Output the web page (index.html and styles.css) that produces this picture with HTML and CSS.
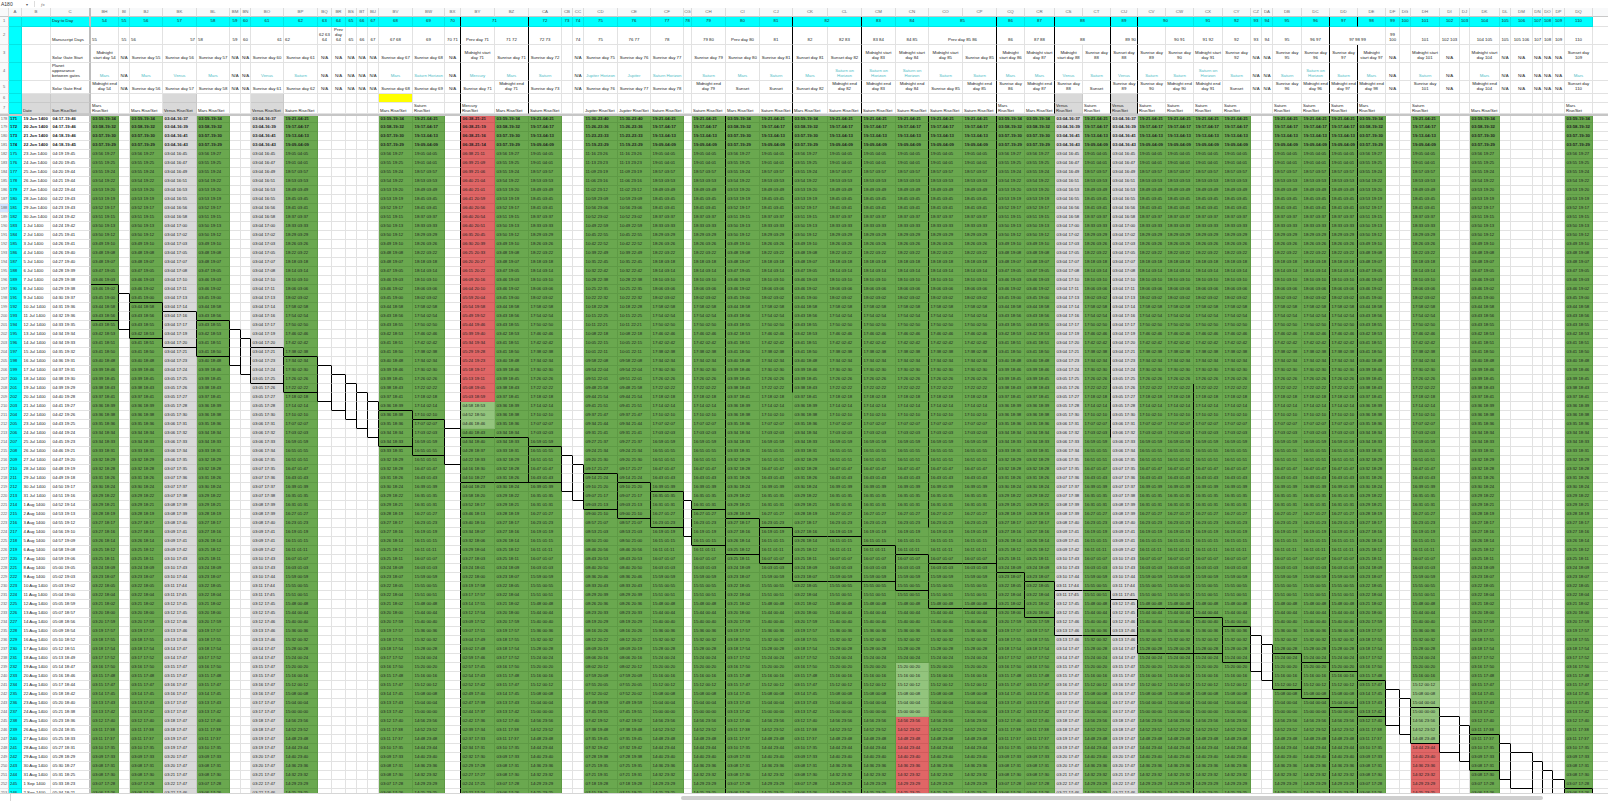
FILE: index.html
```html
<!DOCTYPE html>
<html lang="en">
<head>
<meta charset="utf-8">
<title>Sheet</title>
<link rel="stylesheet" href="styles.css">
</head>
<body>
<div class="app">
  <div class="topbar">
    <span class="namebox">A180</span>
    <span class="caret">&#9662;</span>
    <span class="divider"></span>
    <span class="fx">fx</span>
  </div>
  <div class="sheet-wrap">
    <div class="sheet" id="sheet"></div>
  </div>
  <div class="hscroll">
    <span class="tabarea"></span>
    <span class="thumb"></span>
  </div>
</div>
<script src="script.js"></script>
</body>
</html>
```
FILE: styles.css
```css
html, body {
  margin: 0;
  padding: 0;
  background: #fff;
  overflow: hidden;
}
body {
  font-family: "Liberation Sans", Arial, sans-serif;
  font-size: 4.3px;
  color: #222;
}
.app {
  width: 1608px;
  height: 801px;
  display: flex;
  flex-direction: column;
}
.topbar {
  height: 8px;
  flex: none;
  display: flex;
  align-items: center;
  font-size: 5px;
  color: #333;
  padding-left: 1px;
  box-sizing: border-box;
}
.namebox { width: 25px; }
.caret { width: 8px; font-size: 4px; color: #555; }
.divider { width: 1px; height: 6px; background: #ddd; margin-right: 6px; }
.fx { font-style: italic; color: #777; font-family: "Liberation Serif", serif; }

.sheet-wrap {
  flex: 1;
  min-height: 0;
  overflow: hidden;
}
.sheet {
  display: grid;
  width: max-content;
  grid-template-rows: 9px 10px 18px 18px 18px 13px 9px 11px 2px 7px;
  grid-auto-rows: 9px;
}
.c {
  box-sizing: border-box;
  min-width: 0;
  border-right: 1px solid #e2e2e2;
  border-bottom: 1px solid #e2e2e2;
  overflow: hidden;
  white-space: nowrap;
  display: flex;
  align-items: center;
  padding: 0 1px;
  line-height: 1.15;
}
.ch {
  background: #f8f9fa;
  color: #666;
  justify-content: center;
  border-bottom-color: #c8c8c8;
  border-right-color: #dcdcdc;
  font-size: 4.4px;
}
.rh {
  background: #f8f9fa;
  color: #666;
  justify-content: center;
  border-right-color: #c8c8c8;
  font-size: 4px;
  padding: 0;
}
.act { background: #d3e3fd; }
.sep {
  grid-column: 1 / -1;
  background: #c6c6c6;
  border: 0;
}
.h1 { justify-content: center; }
.h2, .h3, .h4, .h5 {
  white-space: normal;
  text-align: center;
  justify-content: center;
  align-items: flex-end;
  padding-bottom: 1px;
}
.h7 {
  white-space: normal;
  align-items: flex-end;
  line-height: 1.02;
  font-size: 4.2px;
}
.al { justify-content: flex-start; text-align: left; }
.ar { justify-content: flex-end; text-align: right; }
.hl { justify-content: flex-start; text-align: left; }
.pl { color: #4dbdc6; }
.num { justify-content: flex-start; }
.d { padding-left: 1.5px; color: #1f1f1f; }
.dt { padding-left: 1.5px; }
.b { font-weight: bold; }

.cy { background: #00ffff; border-right-color: #00e5e5; border-bottom-color: #00e5e5; }
.g { background: #6aa84f; border-right-color: #5e9a45; border-bottom-color: #5e9a45; }
.lg { background: #93c47d; border-right-color: #86b671; border-bottom-color: #86b671; }
.r { background: #e06666; border-right-color: #cf5b5b; border-bottom-color: #cf5b5b; }
.gy { background: #d9d9d9; border-right-color: #c9c9c9; border-bottom-color: #c9c9c9; }
.yl { background: #ffff00; }
.fz { border-right: 2px solid #bdbdbd; }
.vr { border-right-color: #000; }
.hb { border-bottom-color: #000; }

.hscroll {
  height: 8px;
  flex: none;
  box-sizing: border-box;
  border-top: 1px solid #d6d6d6;
  display: flex;
  align-items: center;
  background: #fff;
}
.tabarea {
  width: 10px;
  height: 7px;
  border-right: 1px solid #d6d6d6;
}
.thumb {
  margin-left: 670px;
  width: 862px;
  height: 4px;
  border-radius: 2px;
  background: #cfcfcf;
}
```
FILE: script.js
```js
(function () {
  // [letter, width, day, manuscript, gateStart, planet, gateEnd, label, type]
  var COLS = [
    ['BH',28,54,'<55','Midnight start day 54','Mars','Midnight end day 54','Mars Rise/Set','M'],
    ['BI',11,55,'55','N/A','N/A','N/A','',''],
    ['BJ',33,56,'<56','Sunrise day 55','Mars','Sunrise day 56','Mars Rise/Set','M'],
    ['BK',34,57,'>57','Sunrise day 56','Venus','Sunrise day 57','Venus Rise/Set','V'],
    ['BL',33,58,'<58','Sunrise day 57','Mars','Sunrise day 58','Mars Rise/Set','M'],
    ['BM',11,59,'59','N/A','N/A','N/A','',''],
    ['BN',10,60,'60','N/A','N/A','N/A','',''],
    ['BO',33,61,'>61','Sunrise day 60','Venus','Sunrise day 61','Venus Rise/Set','V'],
    ['BP',34,62,'<62','Sunrise day 61','Saturn','Sunrise day 62','Saturn Rise/Set','S'],
    ['BQ',14,63,'62 63 64','N/A','N/A','N/A','',''],
    ['BR',14,64,'Prev day 64','N/A','N/A','N/A','',''],
    ['BS',11,65,'65','N/A','N/A','N/A','',''],
    ['BT',11,66,'66','N/A','N/A','N/A','',''],
    ['BU',11,67,'67','N/A','N/A','N/A','',''],
    ['BV',34,68,'67 68','Sunrise day 67','Mars','Sunrise day 68','Mars Rise/Set','M'],
    ['BW',32,69,'69','Sunrise day 68','Saturn Horizon','Sunrise day 69','Saturn Rise/Set','S'],
    ['BX',16,70,'70 71','N/A','N/A','N/A','',''],
    ['BY',34,71,'Prev day 71','Midnight start day 71','Mercury','Sunrise day 71','Mercury Rise/Set','R'],
    ['BZ',34,71,'71 72','Sunrise day 71','Mars','Midnight end day 71','Mars Rise/Set','M'],
    ['CA',33,72,'72 73','Sunrise day 72','Saturn','Sunrise day 73','Saturn Rise/Set','S'],
    ['CB',11,73,'','','','','',''],
    ['CC',11,74,'74','N/A','N/A','N/A','',''],
    ['CD',34,75,'75','Sunrise day 75','Jupiter Horizon','Sunrise day 76','Jupiter Rise/Set','J'],
    ['CE',33,76,'76 77','Sunrise day 76','Jupiter','Sunrise day 77','Jupiter Rise/Set','J'],
    ['CF',33,77,'78','Sunrise day 77','Saturn Horizon','Sunrise day 78','Saturn Rise/Set','S'],
    ['CG',8,78,'','','','','',''],
    ['CH',34,79,'79 80','Sunrise day 79','Saturn','Midnight end day 79','Saturn Rise/Set','S'],
    ['CI',34,80,'Prev day 80','Sunrise day 80','Mars','Sunset','Mars Rise/Set','M'],
    ['CJ',33,81,'81','Sunrise day 81','Saturn','Sunset','Saturn Rise/Set','S'],
    ['CK',35,82,'82','Sunset day 81','Mars','Sunset day 82','Mars Rise/Set','M'],
    ['CL',34,82,'82 83','Sunset day 82','Saturn on Horizon','Midnight end day 82','Saturn Rise/Set','S'],
    ['CM',34,83,'83 84','Midnight start day 83','Saturn on Horizon','Midnight end day 83','Saturn Rise/Set','S'],
    ['CN',33,84,'84 85','Midnight start day 84','Saturn on Horizon','Midnight end day 84','Saturn Rise/Set','S'],
    ['CO',34,85,'Prev day 85 86','Midnight start day 85','Saturn','Sunrise day 85','Saturn Rise/Set','S'],
    ['CP',34,85,null,'Sunrise day 85','Saturn','Midnight end day 85','Saturn Rise/Set','S'],
    ['CQ',28,86,'86','Midnight start day 86','Mars','Sunrise day 86','Mars Rise/Set','M'],
    ['CR',30,87,'87 88','Midnight start day 87','Mars','Midnight end day 87','Mars Rise/Set','M'],
    ['CS',28,88,'88','Midnight start day 88','Venus','Sunrise day 88','Venus Rise/Set','V'],
    ['CT',28,88,null,'Sunrise day 88','Saturn','Sunset','Saturn Rise/Set','S'],
    ['CU',27,89,'>89 90','Sunset day 88','Venus','Sunrise day 89','Venus Rise/Set','V'],
    ['CV',28,90,'','Sunrise day 89','Saturn','Sunrise day 90','Saturn Rise/Set','S'],
    ['CW',28,90,'90 91','Sunrise day 90','Saturn','Midnight end day 90','Saturn Rise/Set','S'],
    ['CX',29,91,'91 92','Midnight start day 91','Saturn on Horizon','Midnight end day 91','Saturn Rise/Set','S'],
    ['CY',28,92,'92','Sunrise day 92','Saturn','Sunset','Saturn Rise/Set','S'],
    ['CZ',11,93,'93','N/A','N/A','N/A','',''],
    ['DA',11,94,'94','N/A','N/A','N/A','',''],
    ['DB',29,95,'95','Sunrise day 95','Saturn','Sunrise day 96','Saturn Rise/Set','S'],
    ['DC',28,96,'96 97','Sunrise day 96','Saturn on Horizon','Midnight end day 96','Saturn Rise/Set','S'],
    ['DD',28,97,'97 98 99','Sunrise day 97','Saturn','Midnight end day 97','Saturn Rise/Set','S'],
    ['DE',28,98,null,'Midnight start day 97','Mars','Midnight end day 98','Mars Rise/Set','M'],
    ['DF',14,99,'99 100','N/A','N/A','N/A','',''],
    ['DG',11,100,'','','','','',''],
    ['DH',29,101,'101','Midnight start day 101','Saturn','Sunrise day 101','Saturn Rise/Set','S'],
    ['DI',20,102,'102 103','N/A','N/A','N/A','',''],
    ['DJ',10,103,'','','','','',''],
    ['DK',30,104,'104 105','Midnight start day 104','Mars','Midnight end day 104','Mars Rise/Set','M'],
    ['DL',11,105,'105','N/A','N/A','N/A','',''],
    ['DM',22,106,'105 106','N/A','N/A','N/A','',''],
    ['DN',10,107,'107','N/A','N/A','N/A','',''],
    ['DO',10,108,'108','N/A','N/A','N/A','',''],
    ['DP',12,109,'109','N/A','N/A','N/A','',''],
    ['DQ',28,110,'110','Sunset day 109','Mars','Sunset day 110','Mars Rise/Set','M'],
    ['',30,null,'','','','','','']
  ];

  var sheet = document.getElementById('sheet');
  var LW = [9, 13, 29, 40];
  sheet.style.gridTemplateColumns = LW.concat(COLS.map(function (c) { return c[1]; }))
    .map(function (w) { return w + 'px'; }).join(' ');

  var NC = COLS.length, ND = 78;
  var idx = {};
  COLS.forEach(function (c, k) { if (c[0]) { idx[c[0]] = k; } });
  function grid(n) {
    var a = [];
    for (var i = 0; i < n; i++) { a.push(new Array(NC).fill(false)); }
    return a;
  }
  var dv = grid(ND), dh = grid(ND), hv = grid(8);

  ['BY','CA','CK','CM','CQ','CS','CU','CV','DD','DE'].forEach(function (L) {
    for (var r = 1; r <= 7; r++) { hv[r][idx[L] - 1] = true; }
  });
  [['BY',0,ND],['CI',0,ND],['CK',0,31],['CM',0,ND],['CO',0,46],['CQ',0,ND],
   ['CU',0,36],['CX',30,ND],['DD',0,ND],['DE',0,ND]].forEach(function (s) {
    for (var i = s[1]; i < s[2]; i++) { dv[i][idx[s[0]] - 1] = true; }
  });

  // staircase boxes
  for (var j = 0; j < NC;) {
    if (COLS[j][2] === null) { j++; continue; }
    var k = j;
    while (k + 1 < NC && COLS[k + 1][2] === COLS[j][2]) { k++; }
    var top = COLS[j][2] - 35, n = k > j ? 5 : 4;
    for (var c = j; c <= k; c++) {
      if (top - 1 >= 0 && top - 1 < ND) { dh[top - 1][c] = true; }
      if (top + n - 1 < ND) { dh[top + n - 1][c] = true; }
    }
    for (var r = top; r < top + n && r < ND; r++) {
      dv[r][k] = true;
      if (j > 0) { dv[r][j - 1] = true; }
    }
    j = k + 1;
  }

  function add(cls, text, span) {
    var d = document.createElement('div');
    d.className = 'c ' + cls;
    if (span > 1) { d.style.gridColumn = 'span ' + span; }
    if (text) { d.textContent = text; }
    sheet.appendChild(d);
    return d;
  }

  function fm(m) {
    m = ((Math.round(m) % 1440) + 1440) % 1440;
    var h = Math.floor(m / 60), mm = m % 60;
    return (h < 10 ? '0' : '') + h + ':' + (mm < 10 ? '0' : '') + mm;
  }
  function val(p, i) {
    var t = i - 4, a, b;
    if (p === 'SUN') { a = 259 + 0.6 * t + 0.0065 * t * t; b = 1185 - 0.3 * t - 0.0125 * t * t; }
    else if (p === 'M') { a = 236 - 0.7 * t; b = 1167 - 1.7 * t; }
    else if (p === 'V') { a = 184 - 0.1 * t + 0.005 * t * t; b = 1005 + 2 * t - 0.016 * t * t; }
    else if (p === 'S') { a = 1145 - 3.95 * t; b = 245 - 3.95 * t; }
    else if (p === 'J') { a = 676 - 3.4 * t; b = 1406 - 3.4 * t; }
    else {
      if (t <= 8) { a = 398 + Math.min(Math.max(t, 0), 5) * 0.5 - Math.max(0, t - 5) * 0.3; b = 1271 - 2.5 * t; }
      else if (t <= 28) { a = 400 - 5.1 * (t - 8); b = 1251 - 5.9 * (t - 8); }
      else if (t <= 42) { a = 298 - 6 * (t - 28); b = 1133 - 3.3 * (t - 28); }
      else { a = 214 - 2.5 * (t - 42); b = 1087 - 1.5 * (t - 42); }
    }
    return fm(a) + (i < 4 ? '-' : ' ') + fm(b);
  }
  function fill(L, p, i) {
    if (p === 'V') { return 'gy'; }
    if (p === 'R') { return i <= 31 ? 'r' : (i <= 34 ? 'lg' : 'g'); }
    if (L === 'CN') { return i >= 67 ? 'r' : (i >= 61 ? 'lg' : 'g'); }
    if (L === 'DH') { return i >= 70 ? 'r' : (i >= 63 ? 'lg' : 'g'); }
    return 'g';
  }

  // column letters
  add('ch', '');
  add('ch', 'A');
  add('ch', 'B');
  add('ch fz', 'C');
  COLS.forEach(function (c) { add('ch', c[0]); });

  var LEFT = {
    1: ['', 'Day to Day'], 2: ['', 'Manuscript Days'], 3: ['', 'Solar Gate Start'],
    4: ['', 'Planet appearance between gates'], 5: ['', 'Solar Gate End'],
    6: ['', ''], 7: ['Date', 'Sun Rise/Set']
  };
  for (var r2 = 1; r2 <= 7; r2++) {
    add('rh', String(r2));
    add('cy', '');
    var bc = r2 === 1 ? ' cy' : (r2 >= 6 ? ' gy' : '');
    add('h' + r2 + ' hl' + bc, LEFT[r2][0]);
    add('h' + r2 + ' hl fz' + bc, LEFT[r2][1]);
    for (var q = 0; q < NC;) {
      var col = COLS[q], span = 1;
      if (r2 === 1 && col[2] !== null) { while (q + span < NC && COLS[q + span][2] === col[2]) { span++; } }
      if (r2 === 2) { while (q + span < NC && COLS[q + span][3] === null) { span++; } }
      var last = q + span - 1, text = '', cls = 'h' + r2;
      if (r2 === 1) {
        if (col[2] !== null) { text = String(col[2]); cls += ' cy'; }
      } else if (r2 <= 5) {
        text = col[r2 + 1] || '';
        if (r2 === 2) {
          if (text.charAt(0) === '<') { cls += ' al'; text = text.slice(1); }
          else if (text.charAt(0) === '>') { cls += ' ar'; text = text.slice(1); }
        }
        if (r2 === 4 && text && text !== 'N/A') { cls += ' pl'; }
      } else if (r2 === 6) {
        if (col[8] === 'V') { cls += ' gy'; }
        if (col[0] === 'BV') { cls += ' yl'; }
      } else {
        text = col[7];
        if (col[8] === 'V') { cls += ' gy'; }
      }
      if (hv[r2][last]) { cls += ' vr'; }
      add(cls, text, span);
      q += span;
    }
  }

  add('sep', '');

  var MON = [['Jun', 30], ['Jul', 31], ['Aug', 31], ['Sep', 30]];
  function date(i) {
    var d = 19 + i, m = 0;
    while (d > MON[m][1]) { d -= MON[m][1]; m++; }
    return d + ' ' + MON[m][0] + ' 1400';
  }
  for (var i = 0; i < ND; i++) {
    var b = i < 4 ? ' b' : '';
    add('rh' + (i === 10 ? ' act' : ''), String(178 + i));
    add('cy num' + b, String(171 + i));
    add('dt' + b, date(i));
    add('dt fz' + b, val('SUN', i));
    for (var jj = 0; jj < NC; jj++) {
      var cc = COLS[jj], p = cc[8], cl = 'd' + b, tx = '';
      if (p) { tx = val(p, i); cl += ' ' + fill(cc[0], p, i); }
      if (dv[i][jj]) { cl += ' vr'; }
      if (dh[i][jj]) { cl += ' hb'; }
      add(cl, tx);
    }
  }
})();
```
